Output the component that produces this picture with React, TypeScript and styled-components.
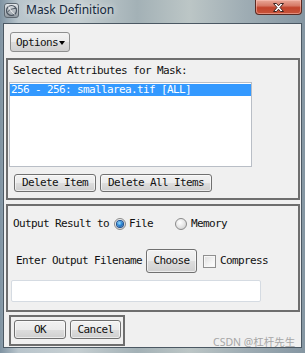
import React from "react";
import styled, { createGlobalStyle } from "styled-components";

const GlobalStyle = createGlobalStyle`
  html, body {
    margin: 0;
    padding: 0;
    background: #8d9ba5;
  }
  #root {
    width: 305px;
    height: 353px;
  }
`;

const mono = `"DejaVu Sans Mono", "Liberation Mono", monospace`;

const Window = styled.div`
  position: relative;
  width: 305px;
  height: 353px;
  box-sizing: border-box;
  padding: 0 3px 5px 3px;
  display: flex;
  flex-direction: column;
  background: linear-gradient(
    90deg,
    #7f93a2 0%,
    #b9c5cc 6%,
    #c6cfd2 25%,
    #a3b1b6 45%,
    #bcc6c6 62%,
    #9fadb4 80%,
    #8596a2 100%
  );
`;

const TitleBar = styled.div`
  height: 23px;
  flex: none;
  display: flex;
  align-items: flex-start;
`;

const AppIcon = styled.svg`
  width: 15px;
  height: 15px;
  margin: 3px 0 0 1px;
  flex: none;
`;

const Title = styled.span`
  margin: 2px 0 0 7px;
  font-family: "Noto Sans", "Open Sans", sans-serif;
  font-size: 12px;
  line-height: 16px;
  color: #15283c;
  text-shadow: 0 0 6px rgba(255, 255, 255, 0.9);
`;

const CloseButton = styled.div`
  margin-left: auto;
  width: 47px;
  height: 15px;
  box-sizing: border-box;
  border: 1px solid #5a2a22;
  border-top: none;
  border-radius: 0 0 4px 4px;
  background: linear-gradient(180deg, #e9a898 0%, #d77a67 40%, #c2432b 55%, #c8553b 100%);
  box-shadow: inset 0 0 0 1px rgba(255, 200, 190, 0.5);
  display: flex;
  align-items: center;
  justify-content: center;
`;

const Client = styled.div`
  flex: 1;
  display: flex;
  flex-direction: column;
  align-items: flex-start;
  background: #f0f0f0;
  border: 1px solid #4b5863;
  padding: 8px 1px 1px 2px;
  box-sizing: border-box;
  font-family: ${mono};
  font-size: 11px;
  letter-spacing: -0.62px;
  color: #111;
`;

const MenuButton = styled.div`
  margin-left: 4px;
  width: 60px;
  height: 20px;
  box-sizing: border-box;
  border: 1px solid #8e8f8f;
  border-radius: 3px;
  background: linear-gradient(180deg, #f4f4f4 0%, #ebebeb 50%, #dcdcdc 52%, #d0d0d0 100%);
  display: flex;
  align-items: center;
  padding-left: 5px;
  gap: 1px;
`;

const Caret = styled.span`
  width: 0;
  height: 0;
  border-left: 3.5px solid transparent;
  border-right: 3.5px solid transparent;
  border-top: 4px solid #000;
  margin-top: 1px;
`;

const Panel = styled.div<{ $width?: number; $gap?: number; $left?: number }>`
  margin-top: ${(p) => p.$gap ?? 4}px;
  margin-left: ${(p) => p.$left ?? 0}px;
  width: ${(p) => (p.$width ? `${p.$width}px` : "294px")};
  box-sizing: border-box;
  border: 2px solid #6e6e6e;
  display: flex;
  flex-direction: column;
  align-items: flex-start;
`;

const Label = styled.span<{ $ml?: number }>`
  margin-left: ${(p) => p.$ml ?? 0}px;
  line-height: 12px;
  white-space: pre;
`;

const ListBox = styled.div`
  margin: 5px 0 0 1px;
  width: 243px;
  height: 85px;
  box-sizing: border-box;
  background: #fff;
  border: 1px solid #b9bec6;
  padding: 1px 0 0 0;
`;

const ListItem = styled.div<{ $selected?: boolean }>`
  height: 12px;
  line-height: 12px;
  padding-left: 1px;
  background: ${(p) => (p.$selected ? "#3399ff" : "transparent")};
  color: ${(p) => (p.$selected ? "#fff" : "#000")};
  white-space: pre;
`;

const Row = styled.div<{ $mt: number; $ml: number; $gap?: number }>`
  display: flex;
  align-items: center;
  margin-top: ${(p) => p.$mt}px;
  margin-left: ${(p) => p.$ml}px;
  gap: ${(p) => p.$gap ?? 0}px;
`;

const Button = styled.div<{ $w: number; $h?: number }>`
  width: ${(p) => p.$w}px;
  height: ${(p) => p.$h ?? 18}px;
  box-sizing: border-box;
  border: 1px solid #707070;
  border-radius: 3px;
  background: linear-gradient(180deg, #f2f2f2 0%, #ebebeb 50%, #dddddd 52%, #cfcfcf 100%);
  box-shadow: inset 0 0 0 1px rgba(255, 255, 255, 0.6);
  display: flex;
  align-items: center;
  justify-content: center;
  white-space: pre;
  line-height: 12px;
`;

const Radio = styled.span<{ $checked?: boolean }>`
  width: 12px;
  height: 12px;
  box-sizing: border-box;
  border-radius: 50%;
  border: 1px solid #8a8a8a;
  background: radial-gradient(circle at 40% 35%, #ffffff 0%, #e6e6e6 50%, #c8c8c8 100%);
  display: flex;
  align-items: center;
  justify-content: center;
  flex: none;
  &::after {
    content: "";
    display: ${(p) => (p.$checked ? "block" : "none")};
    width: 6px;
    height: 6px;
    border-radius: 50%;
    background: radial-gradient(circle at 40% 35%, #9fe0ff 0%, #2e8ad8 45%, #0e3f8a 100%);
    box-shadow: 0 0 0 1px #1c4f8f;
  }
`;

const CheckBox = styled.span`
  width: 13px;
  height: 13px;
  box-sizing: border-box;
  border: 1px solid #8f8f8f;
  background: linear-gradient(135deg, #dcdcdc 0%, #f4f4f4 60%, #ffffff 100%);
  box-shadow: inset 0 0 0 1px #f7f7f7;
  flex: none;
`;

const TextField = styled.div`
  margin: 7px 0 8px 3px;
  width: 250px;
  height: 22px;
  box-sizing: border-box;
  background: #fff;
  border: 1px solid #d5dbe2;
  border-radius: 2px;
`;

const Watermark = styled.span`
  position: absolute;
  left: 213px;
  top: 335px;
  font-family: "Noto Sans", "Noto Sans CJK SC", sans-serif;
  font-size: 10.5px;
  line-height: 14px;
  color: #a6a6a6;
  white-space: pre;
`;

export default function App() {
  return (
    <>
      <GlobalStyle />
      <Window>
        <TitleBar>
          <AppIcon viewBox="0 0 15 15">
            <defs>
              <linearGradient id="ig" x1="0" y1="0" x2="0" y2="1">
                <stop offset="0" stopColor="#e6e9ec" />
                <stop offset="1" stopColor="#8d969e" />
              </linearGradient>
            </defs>
            <rect x="0.5" y="0.5" width="14" height="14" rx="2.5" fill="url(#ig)" stroke="#5d6770" />
            <circle cx="7.5" cy="7.5" r="5" fill="none" stroke="#4b5560" strokeWidth="1.2" />
            <path d="M3 9.5 C6 6, 9 5.5, 12.5 5.5" fill="none" stroke="#4b5560" strokeWidth="1" />
            <path d="M4.5 3.5 C6 6.5, 8 9.5, 11 11.5" fill="none" stroke="#ffffff" strokeWidth="0.8" />
          </AppIcon>
          <Title>Mask Definition</Title>
          <CloseButton>
            <svg width="13" height="11" viewBox="0 0 13 11">
              <path
                d="M1.5 1.5 L4.5 1.5 L6.5 3.8 L8.5 1.5 L11.5 1.5 L8 5.5 L11.5 9.5 L8.5 9.5 L6.5 7.2 L4.5 9.5 L1.5 9.5 L5 5.5 Z"
                fill="#ffffff"
                stroke="#3f2320"
                strokeWidth="1"
                strokeLinejoin="round"
              />
            </svg>
          </CloseButton>
        </TitleBar>
        <Client>
          <MenuButton>
            Options
            <Caret />
          </MenuButton>

          <Panel $gap={6}>
            <Label $ml={5} style={{ marginTop: 5 }}>
              Selected Attributes for Mask:
            </Label>
            <ListBox>
              <ListItem $selected>256 - 256: smallarea.tif [ALL]</ListItem>
            </ListBox>
            <Row $mt={7} $ml={6} $gap={4} style={{ marginBottom: 6 }}>
              <Button $w={82}>Delete Item</Button>
              <Button $w={112}>Delete All Items</Button>
            </Row>
          </Panel>

          <Panel $gap={4}>
            <Row $mt={12} $ml={5}>
              <Label>Output Result to</Label>
              <Radio $checked style={{ marginLeft: 5 }} />
              <Label $ml={3}>File</Label>
              <Radio style={{ marginLeft: 22 }} />
              <Label $ml={4}>Memory</Label>
            </Row>
            <Row $mt={19} $ml={8}>
              <Label>Enter Output Filename</Label>
              <Button $w={51} $h={24} style={{ marginLeft: 4 }}>
                Choose
              </Button>
              <CheckBox style={{ marginLeft: 6 }} />
              <Label $ml={4}>Compress</Label>
            </Row>
            <TextField />
          </Panel>

          <Panel $gap={3} $left={3} $width={116}>
            <Row $mt={3} $ml={3} $gap={4} style={{ marginBottom: 5 }}>
              <Button $w={52} $h={19}>OK</Button>
              <Button $w={51} $h={19}>Cancel</Button>
            </Row>
          </Panel>
        </Client>
        <Watermark>CSDN @杠杆先生</Watermark>
      </Window>
    </>
  );
}
